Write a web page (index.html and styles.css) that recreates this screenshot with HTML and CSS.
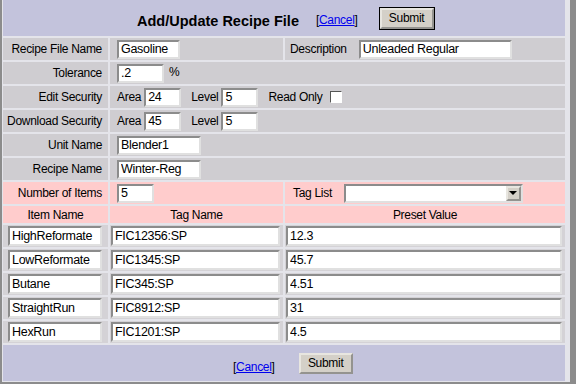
FILE: index.html
```html
<!DOCTYPE html>
<html lang="en">
<head>
  <meta charset="UTF-8">
  <title>Add/Update Recipe File</title>
  <link rel="stylesheet" href="styles.css">
</head>
<body>
  <div class="frame">
    <table class="recipe">
      <colgroup>
        <col class="c1">
        <col class="c2">
        <col class="c3">
      </colgroup>
      <tr class="head">
        <td colspan="3">
          <div class="bar top">
            <span class="title">Add/Update Recipe File</span>
            <span class="cancel">[<a href="#">Cancel</a>]</span>
            <button class="btn default">Submit</button>
          </div>
        </td>
      </tr>
      <tr class="row">
        <td class="lbl">Recipe File Name</td>
        <td class="val"><input class="txt w62" value="Gasoline"></td>
        <td class="val right">Description <input class="txt w152" value="Unleaded Regular"></td>
      </tr>
      <tr class="row">
        <td class="lbl">Tolerance</td>
        <td class="val" colspan="2"><input class="txt w46" value=".2"> <span class="pct">%</span></td>
      </tr>
      <tr class="row">
        <td class="lbl">Edit Security</td>
        <td class="val" colspan="2">
          Area <input class="txt w36" value="24"><span class="gap"></span>Level <input class="txt w36" value="5"><span class="gap"></span>Read Only <input type="checkbox" class="chk">
        </td>
      </tr>
      <tr class="row">
        <td class="lbl">Download Security</td>
        <td class="val" colspan="2">
          Area <input class="txt w36" value="45"><span class="gap"></span>Level <input class="txt w36" value="5">
        </td>
      </tr>
      <tr class="row">
        <td class="lbl">Unit Name</td>
        <td class="val" colspan="2"><input class="txt w83" value="Blender1"></td>
      </tr>
      <tr class="row">
        <td class="lbl">Recipe Name</td>
        <td class="val" colspan="2"><input class="txt w83" value="Winter-Reg"></td>
      </tr>
      <tr class="row pink">
        <td class="lbl">Number of Items</td>
        <td class="val"><input class="txt w36" value="5"></td>
        <td class="val right tag">
          Tag List
          <div class="select">
            <span class="field"></span>
            <span class="drop"><span class="arrow"></span></span>
          </div>
        </td>
      </tr>
      <tr class="pink colhead">
        <td>Item Name</td>
        <td>Tag Name</td>
        <td>Preset Value</td>
      </tr>
      <tr class="item">
        <td class="i1"><input class="txt" value="HighReformate"></td>
        <td class="i2"><input class="txt" value="FIC12356:SP"></td>
        <td class="i3"><input class="txt" value="12.3"></td>
      </tr>
      <tr class="item">
        <td class="i1"><input class="txt" value="LowReformate"></td>
        <td class="i2"><input class="txt" value="FIC1345:SP"></td>
        <td class="i3"><input class="txt" value="45.7"></td>
      </tr>
      <tr class="item">
        <td class="i1"><input class="txt" value="Butane"></td>
        <td class="i2"><input class="txt" value="FIC345:SP"></td>
        <td class="i3"><input class="txt" value="4.51"></td>
      </tr>
      <tr class="item">
        <td class="i1"><input class="txt" value="StraightRun"></td>
        <td class="i2"><input class="txt" value="FIC8912:SP"></td>
        <td class="i3"><input class="txt" value="31"></td>
      </tr>
      <tr class="item">
        <td class="i1"><input class="txt" value="HexRun"></td>
        <td class="i2"><input class="txt" value="FIC1201:SP"></td>
        <td class="i3"><input class="txt" value="4.5"></td>
      </tr>
      <tr class="foot">
        <td colspan="3">
          <div class="bar bottom">
            <span class="cancel">[<a href="#">Cancel</a>]</span>
            <button class="btn">Submit</button>
          </div>
        </td>
      </tr>
    </table>
  </div>
</body>
</html>
```

FILE: styles.css
```css
html, body {
  margin: 0;
  padding: 0;
}

body {
  background: #8c8c8c;
  font-family: "Liberation Sans", Arial, sans-serif;
  font-size: 12px;
  letter-spacing: -0.3px;
  color: #000;
  width: 576px;
  height: 384px;
  overflow: hidden;
}

.frame {
  margin-left: 2px;
  width: 568px;
  height: 382px;
  background: #e4e4ea;
  overflow: hidden;
}

.recipe {
  width: 566px;
  border-collapse: separate;
  border-spacing: 2px;
  margin: -2px 0 0 -1px;
  table-layout: fixed;
}

.c1 { width: 105px; }
.c2 { width: 173px; }

td {
  padding: 0;
  vertical-align: middle;
}

.head td, .foot td {
  background: #c3c3dc;
}

.head td { height: 36px; }
.foot td { height: 36px; }

.bar {
  display: flex;
  align-items: center;
}

.bar.top {
  padding-left: 134px;
}

.title {
  font-size: 14.5px;
  font-weight: bold;
  letter-spacing: 0;
  margin-top: 6px;
  margin-right: 17px;
}

.bar.top .cancel {
  margin-top: 4px;
  margin-right: 22px;
}

.bar.bottom {
  padding-left: 230px;
}

.bar.bottom .cancel {
  margin-top: 8px;
  margin-right: 24px;
}

.cancel a {
  color: #0000ee;
}

.btn {
  font-family: inherit;
  font-size: 12px;
  letter-spacing: -0.3px;
  width: 54px;
  height: 21px;
  padding: 0;
  background: #d4d0c8;
  border: 2px outset #e8e6e0;
  color: #000;
}

.btn.default {
  outline: 1px solid #000;
}

.row td {
  height: 22px;
  background: #cfcdd1;
}

.row.pink td, .colhead td {
  background: #ffcccc;
}

.lbl {
  text-align: right;
  padding-right: 6px;
}

.val {
  padding-left: 7px;
  white-space: nowrap;
}

.val.right {
  padding-left: 5px;
}

.val.tag {
  padding-left: 8px;
  display: flex;
  align-items: center;
  height: 22px;
}

.txt {
  font-family: inherit;
  font-size: 12.5px;
  letter-spacing: -0.3px;
  height: 19px;
  box-sizing: border-box;
  padding: 0 2px;
  margin: 0;
  border: 2px inset #e0e0e0;
  background: #fff;
  color: #000;
  vertical-align: middle;
}

.w36 { width: 37px; }
.w46 { width: 47px; }
.w62 { width: 63px; }
.w83 { width: 84px; }
.w152 { width: 153px; margin-left: 9px; }

.pct {
  margin-left: 2px;
}

.gap {
  display: inline-block;
  width: 10px;
}

.chk {
  appearance: none;
  width: 12px;
  height: 12px;
  margin: 0 0 0 5px;
  border: 1px solid;
  border-color: #555 #fff #fff #555;
  background: #fff;
  vertical-align: middle;
}

.select {
  display: flex;
  margin-left: 12px;
  width: 179px;
  height: 19px;
  box-sizing: border-box;
  border: 2px inset #e0e0e0;
  background: #fff;
}

.field {
  flex: 1;
}

.drop {
  width: 15px;
  display: flex;
  align-items: center;
  justify-content: center;
  box-sizing: border-box;
  border: 2px outset #e8e6e0;
  background: #d4d0c8;
}

.arrow {
  width: 0;
  height: 0;
  border-left: 4px solid transparent;
  border-right: 4px solid transparent;
  border-top: 4px solid #000;
}

.colhead td {
  height: 17px;
  text-align: center;
}

.item td {
  height: 22px;
  background: #d4d2d6;
}

.item .txt {
  height: 20px;
}

.i1 { padding-left: 5px; }
.i1 .txt { width: 94px; }
.i2 { padding-left: 1px; }
.i2 .txt { width: 169px; }
.i3 { padding-left: 1px; }
.i3 .txt { width: 276px; }
```
